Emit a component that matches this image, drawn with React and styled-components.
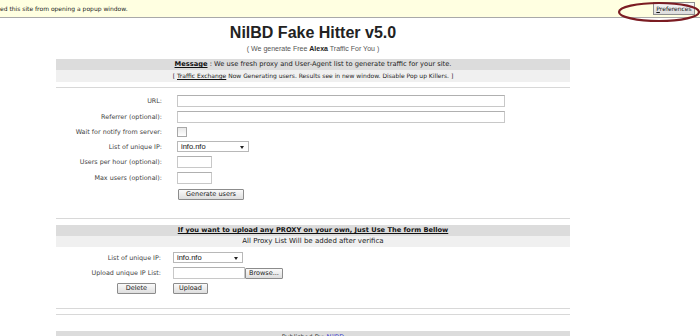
import React from 'react';
import styled, { createGlobalStyle } from 'styled-components';

const GlobalStyle = createGlobalStyle`
  html, body {
    margin: 0;
    padding: 0;
    background: #fff;
    width: 700px;
    height: 336px;
    overflow: hidden;
  }
`;

const InfoBar = styled.div`
  position: relative;
  display: flex;
  align-items: center;
  justify-content: space-between;
  height: 17px;
  background: #ffffe1;
  border-bottom: 1px solid #a9a9a9;
  font-family: "DejaVu Sans", Verdana, sans-serif;
  font-size: 6px;
  color: #222;
  padding: 0 5px 0 0;
`;

const PrefButton = styled.div`
  height: 11px;
  width: 40px;
  border: 1px solid #8e8f8f;
  background: linear-gradient(#f8f8f8, #dcdcdc);
  font-size: 6px;
  line-height: 11px;
  text-align: center;
  color: #111;
  span {
    text-decoration: underline;
  }
`;

const Ring = styled.svg`
  position: absolute;
  left: 617px;
  top: 1px;
`;

const Header = styled.div`
  width: 514px;
  margin-left: 56px;
  text-align: center;
  padding-top: 6px;
`;

const Title = styled.h1`
  margin: 0;
  font-family: "Liberation Sans", Arial, sans-serif;
  font-size: 16px;
  font-weight: bold;
  color: #222;
  line-height: 18px;
`;

const Subtitle = styled.div`
  font-family: "Liberation Sans", Arial, sans-serif;
  font-size: 7px;
  color: #555;
  line-height: 9px;
  margin-top: 2px;
  b {
    color: #222;
  }
`;

const Box = styled.div`
  width: 514px;
  margin-left: 56px;
  margin-top: ${p => p.top || 0}px;
  font-family: "DejaVu Sans", Verdana, sans-serif;
  font-size: 6.4px;
  color: #333;
`;

const Bar = styled.div`
  height: ${p => p.h || 11}px;
  line-height: ${p => p.h || 11}px;
  text-align: center;
  background: ${p => (p.light ? '#f0f0f0' : '#dcdcdc')};
  color: #222;
  font-weight: ${p => (p.bold ? 'bold' : 'normal')};
  font-size: ${p => p.fs || 6}px;
  margin-top: ${p => p.top || 0}px;
  white-space: nowrap;
  b, u {
    color: #111;
  }
`;

const Rule = styled.div`
  height: 0;
  border-top: 1px solid #d8d8d8;
  margin-top: ${p => p.top || 0}px;
`;

const Form = styled.div`
  display: grid;
  grid-template-columns: ${p => p.label}px auto;
  column-gap: ${p => p.gap}px;
  row-gap: 4px;
  align-items: center;
  padding-top: ${p => p.top}px;
  justify-items: start;
`;

const Label = styled.div`
  justify-self: end;
  color: #444;
  white-space: nowrap;
`;

const Field = styled.div`
  box-sizing: border-box;
  width: ${p => p.w}px;
  height: 12px;
  border: 1px solid #c8c8c8;
  border-top-color: #b0b0b0;
  background: #fff;
`;

const Check = styled.div`
  box-sizing: border-box;
  width: 10px;
  height: 10px;
  border: 1px solid #a8a8a8;
  background: linear-gradient(#e8e8e8, #fff);
`;

const Select = styled.div`
  box-sizing: border-box;
  width: ${p => p.w}px;
  height: 11px;
  border: 1px solid #b8b8b8;
  background: #fff;
  display: flex;
  align-items: center;
  justify-content: space-between;
  padding: 0 4px 0 3px;
  font-family: "Liberation Sans", Arial, sans-serif;
  font-size: 7.5px;
  color: #111;
`;

const Arrow = styled.span`
  width: 0;
  height: 0;
  border-left: 2.5px solid transparent;
  border-right: 2.5px solid transparent;
  border-top: 3px solid #222;
  margin-top: 2px;
`;

const Button = styled.div`
  box-sizing: border-box;
  height: 11px;
  padding: 0 ${p => p.pad || 6}px;
  border: 1px solid #8c8c8c;
  border-radius: 1px;
  background: linear-gradient(#fafafa, #dedede);
  font-size: 6.5px;
  line-height: 9px;
  color: #222;
  white-space: nowrap;
`;

const Inline = styled.div`
  display: flex;
  align-items: center;
`;

const Cell = styled.div`
  justify-self: end;
  padding-right: 5px;
`;

const Footer = styled.div`
  margin-top: 16px;
  height: 12px;
  line-height: 13px;
  background: #dcdcdc;
  text-align: center;
  color: #333;
  a {
    color: #3333cc;
    text-decoration: none;
  }
`;

export default function App() {
  return (
    <>
      <GlobalStyle />
      <InfoBar>
        <span>ed this site from opening a popup window.</span>
        <PrefButton><span>P</span>references</PrefButton>
        <Ring width="84" height="22" viewBox="0 0 84 22">
          <ellipse cx="42" cy="11" rx="40" ry="9" fill="none" stroke="#7b1c22" strokeWidth="2.2" />
        </Ring>
      </InfoBar>

      <Header>
        <Title>NilBD Fake Hitter v5.0</Title>
        <Subtitle>( We generate Free <b>Alexa</b> Traffic For You )</Subtitle>
      </Header>

      <Box top={6}>
        <Bar fs={6.7}><b><u>Message</u></b> : We use fresh proxy and User-Agent list to generate traffic for your site.</Bar>
        <Bar light h={12}>[ <u>Traffic Exchange</u> Now Generating users. Results see in new window. Disable Pop up Killers. ]</Bar>
        <Rule top={5} />

        <Form label={106} gap={15} top={7}>
          <Label>URL:</Label>
          <Field w={328} />
          <Label>Referrer (optional):</Label>
          <Field w={328} />
          <Label>Wait for notify from server:</Label>
          <Check />
          <Label>List of unique IP:</Label>
          <Select w={72}>info.nfo<Arrow /></Select>
          <Label>Users per hour (optional):</Label>
          <Field w={35} />
          <Label>Max users (optional):</Label>
          <Field w={35} />
          <span />
          <Button pad={7} style={{ marginTop: 1, marginLeft: 1 }}>Generate users</Button>
        </Form>

        <Rule top={18} />
        <Bar bold fs={6.65} top={6}><u>If you want to upload any PROXY on your own, Just Use The form Bellow</u></Bar>
        <Bar light fs={7}>All Proxy List Will be added after verifica</Bar>

        <Form label={105} gap={12} top={5}>
          <Label>List of unique IP:</Label>
          <Select w={70}>info.nfo<Arrow /></Select>
          <Label>Upload unique IP List:</Label>
          <Inline>
            <Field w={72} />
            <Button pad={3}>Browse...</Button>
          </Inline>
          <Cell><Button pad={8}>Delete</Button></Cell>
          <Button pad={5}>Upload</Button>
        </Form>

        <Rule top={14} />
        <Rule top={5} />
        <Footer>Published By: <a>NilBD</a></Footer>
      </Box>
    </>
  );
}
